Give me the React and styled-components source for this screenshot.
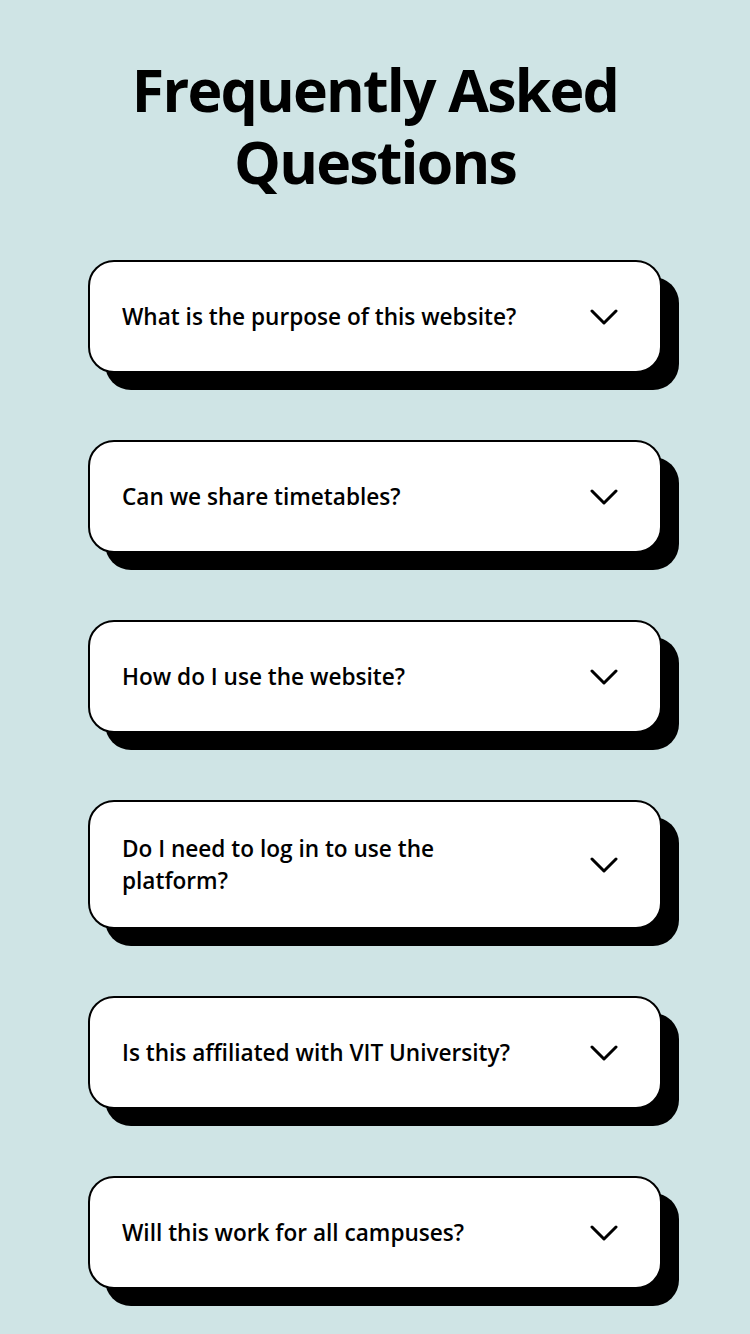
import React from "react";
import styled, { createGlobalStyle } from "styled-components";

const GlobalStyle = createGlobalStyle`
  * {
    box-sizing: border-box;
  }

  body {
    margin: 0;
    background-color: #cfe4e5;
    font-family: "Open Sans", "Noto Sans", sans-serif;
    color: #000;
  }
`;

const Page = styled.main`
  display: flex;
  flex-direction: column;
  align-items: center;
  min-height: 100vh;
  padding: 53px 0 40px;
`;

const Heading = styled.h1`
  margin: 0 0 63px;
  width: 520px;
  text-align: center;
  font-size: 59px;
  line-height: 72px;
  font-weight: 700;
  letter-spacing: -1.8px;
`;

const List = styled.div`
  display: flex;
  flex-direction: column;
  gap: 67px;
  width: 574px;
`;

const Card = styled.button`
  display: flex;
  align-items: center;
  justify-content: space-between;
  gap: 16px;
  width: 100%;
  padding: 30.5px 32px;
  border: 2px solid #000;
  border-radius: 26px;
  background-color: #fff;
  box-shadow: 17px 17px 0 0 #000;
  font-family: inherit;
  text-align: left;
  cursor: pointer;
`;

const Question = styled.span`
  max-width: 420px;
  font-size: 22.6px;
  line-height: 32px;
  font-weight: 600;
  color: #000;
`;

const IconBox = styled.span`
  display: flex;
  flex-shrink: 0;
  align-items: center;
  justify-content: center;
  width: 48px;
  height: 48px;
`;

const Chevron = () => (
  <svg width="28" height="16" viewBox="0 0 28 16" fill="none">
    <polyline
      points="2,2 14,14 26,2"
      stroke="#000"
      strokeWidth="3"
      strokeLinecap="round"
      strokeLinejoin="round"
    />
  </svg>
);

const questions = [
  "What is the purpose of this website?",
  "Can we share timetables?",
  "How do I use the website?",
  "Do I need to log in to use the platform?",
  "Is this affiliated with VIT University?",
  "Will this work for all campuses?",
];

export default function App() {
  return (
    <>
      <GlobalStyle />
      <Page>
        <Heading>Frequently Asked Questions</Heading>
        <List>
          {questions.map((q) => (
            <Card key={q} type="button">
              <Question>{q}</Question>
              <IconBox>
                <Chevron />
              </IconBox>
            </Card>
          ))}
        </List>
      </Page>
    </>
  );
}
